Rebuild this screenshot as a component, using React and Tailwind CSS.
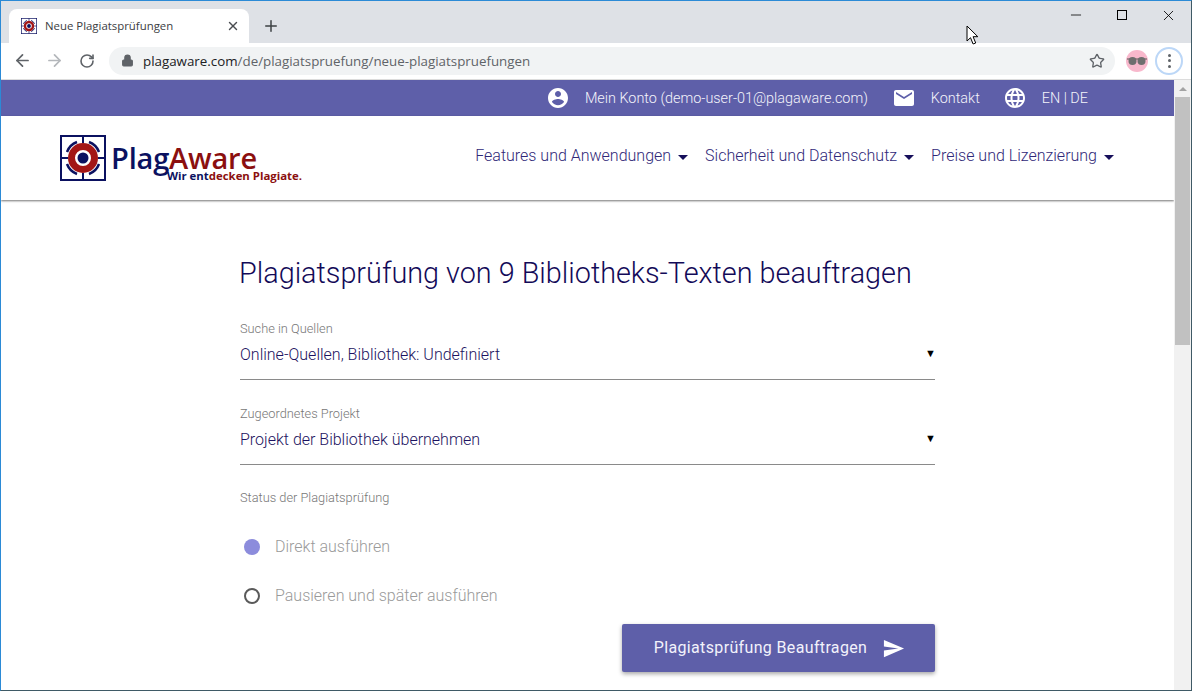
import { Lock, Star, X, Plus, ArrowLeft, ArrowRight, RotateCw, Minus } from 'lucide-react';

function LogoMark({ size = 46 }) {
  return (
    <svg width={size} height={size} viewBox="0 0 46 46">
      <rect x="1" y="1" width="44" height="44" fill="#fff" stroke="#0b1160" strokeWidth="2" />
      <path d="M7 17 A17 17 0 0 1 17 7 M29 7 A17 17 0 0 1 39 17 M39 29 A17 17 0 0 1 29 39 M17 39 A17 17 0 0 1 7 29" fill="none" stroke="#0b1160" strokeWidth="2.5" />
      <path d="M23 1v7M23 38v7M1 23h7M38 23h7" stroke="#0b1160" strokeWidth="2" />
      <circle cx="23" cy="23" r="11.5" fill="none" stroke="#a31616" strokeWidth="7" />
      <circle cx="23" cy="23" r="5.5" fill="#0b1160" />
    </svg>
  );
}

function NavItem({ label }) {
  return (
    <div className="flex items-center gap-[7px]">
      <span>{label}</span>
      <span className="mt-[2px] h-0 w-0 border-x-[5px] border-t-[5px] border-x-transparent border-t-[#160f5a]" />
    </div>
  );
}

function SelectField({ label, value }) {
  return (
    <div className="h-[60px] w-[695px] border-b border-[#8a8a8a]">
      <div className="h-[17px] text-[12.8px] font-light leading-[17px] text-[#777]">{label}</div>
      <div className="mt-[5px] flex h-[25px] items-center justify-between text-[16px] font-light text-[#1c1260]">
        <span>{value}</span>
        <span className="-mr-[1px] text-[11px] text-black">▼</span>
      </div>
    </div>
  );
}

function UserIcon() {
  return (
    <svg width="24" height="24" viewBox="0 0 24 24" fill="#fff">
      <path d="M12 2C6.48 2 2 6.48 2 12s4.48 10 10 10 10-4.48 10-10S17.52 2 12 2zm0 3c1.66 0 3 1.34 3 3s-1.34 3-3 3-3-1.34-3-3 1.34-3 3-3zm0 14.2c-2.5 0-4.71-1.28-6-3.22.03-1.99 4-3.08 6-3.08 1.99 0 5.97 1.09 6 3.08-1.29 1.94-3.5 3.22-6 3.22z" />
    </svg>
  );
}

function MailIcon() {
  return (
    <svg width="24" height="24" viewBox="0 0 24 24" fill="#fff">
      <path d="M20 4H4c-1.1 0-2 .9-2 2v12c0 1.1.9 2 2 2h16c1.100 0 2-.9 2-2V6c0-1.100-.9-2-2-2zm0 4l-8 5-8-5V6l8 5 8-5v2z" />
    </svg>
  );
}

function GlobeIcon() {
  return (
    <svg width="24" height="24" viewBox="0 0 24 24" fill="#fff">
      <path d="M11.99 2C6.47 2 2 6.48 2 12s4.47 10 9.990 10C17.520 22 22 17.520 22 12S17.520 2 11.990 2zm6.930 6h-2.950c-.32-1.250-.78-2.450-1.380-3.560 1.840.63 3.370 1.910 4.330 3.560zM12 4.040c.83 1.200 1.480 2.530 1.910 3.960h-3.820c.43-1.430 1.080-2.760 1.910-3.960zM4.260 14C4.100 13.360 4 12.690 4 12s.1-1.360.26-2h3.380c-.08.66-.14 1.320-.14 2s.06 1.340.14 2H4.260zm.82 2h2.950c.32 1.250.78 2.450 1.380 3.560-1.840-.63-3.370-1.900-4.330-3.560zm2.950-8H5.080c.96-1.660 2.490-2.930 4.330-3.560C8.810 5.550 8.350 6.750 8.030 8zM12 19.960c-.83-1.200-1.480-2.530-1.910-3.960h3.820c-.43 1.430-1.080 2.760-1.910 3.960zM14.340 14H9.660c-.09-.66-.16-1.320-.16-2s.07-1.350.16-2h4.680c.09.65.16 1.320.16 2s-.07 1.340-.16 2zm.25 5.560c.6-1.110 1.060-2.310 1.380-3.560h2.950c-.96 1.650-2.490 2.930-4.330 3.560zM16.360 14c.08-.66.14-1.320.14-2s-.06-1.340-.14-2h3.380c.16.64.26 1.310.26 2s-.1 1.360-.26 2h-3.380z" />
    </svg>
  );
}

export default function App() {
  return (
    <div className="relative flex h-[691px] w-[1192px] flex-col overflow-hidden border border-[#3f5a66] border-l-[#2b8ad6] border-t-[#2b8ad6] bg-white font-['Roboto',sans-serif]">
      {/* Browser tabs */}
      <div className="flex h-[42px] shrink-0 bg-[#dee1e6] font-['Open_Sans',sans-serif]">
        <div className="ml-[8px] mt-[8px] flex h-[34px] w-[240px] items-center rounded-t-[8px] bg-white pl-[12px] pr-[9px] text-[11.4px] text-[#3c4043]">
          <div className="mr-[8px] flex"><LogoMark size={16} /></div>
          <span className="flex-1">Neue Plagiatsprüfungen</span>
          <X size={14} strokeWidth={2.4} className="text-[#4a4d51]" />
        </div>
        <div className="ml-[13px] mt-[8px] flex h-[34px] items-center">
          <Plus size={18} strokeWidth={2} className="text-[#3c4043]" />
        </div>
        <div className="ml-auto flex items-start pt-[6px] text-black">
          <div className="flex w-[46px] justify-center"><Minus size={16} strokeWidth={1.2} /></div>
          <div className="flex w-[46px] justify-center"><span className="mt-[3px] h-[10px] w-[10px] border border-black" /></div>
          <div className="flex w-[46px] justify-center"><X size={17} strokeWidth={1.2} /></div>
        </div>
      </div>

      {/* Browser toolbar */}
      <div className="flex h-[37px] shrink-0 items-center border-b border-[#dcdcdc] bg-white pb-[1px] font-['Open_Sans',sans-serif]">
        <ArrowLeft size={19} strokeWidth={2.2} className="ml-[12px] text-[#5f6368]" />
        <ArrowRight size={19} strokeWidth={2.2} className="ml-[13px] text-[#b4b7bb]" />
        <RotateCw size={16} strokeWidth={2.4} className="ml-[15px] text-[#5f6368]" />
        <div className="ml-[14px] flex h-[28px] w-[1006px] items-center rounded-full bg-[#f1f3f4] pl-[12px] pr-[10px] text-[13.35px]">
          <Lock size={13} fill="#5f6368" strokeWidth={2} className="text-[#5f6368]" />
          <span className="ml-[9px] flex-1 pt-[1px] text-[#202124]">plagaware.com<span className="text-[#5f6368]">/de/plagiatspruefung/neue-plagiatspruefungen</span></span>
          <Star size={16} strokeWidth={2} className="text-[#5f6368]" />
        </div>
        <div className="ml-[11px] flex h-[22px] w-[22px] items-center justify-center rounded-full bg-[#f8b8cc]">
          <svg width="20" height="10" viewBox="0 0 20 10">
            <path d="M0 3h20" stroke="#555" strokeWidth="1" />
            <circle cx="5.500" cy="5" r="4" fill="#6e6e6e" />
            <circle cx="14.500" cy="5" r="4" fill="#6e6e6e" />
          </svg>
        </div>
        <div className="ml-[7px] flex h-[28px] w-[28px] flex-col items-center justify-center gap-[2.500px] rounded-full border-2 border-[#bcd7f7]">
          <span className="h-[3px] w-[3px] rounded-full bg-[#5f6368]" />
          <span className="h-[3px] w-[3px] rounded-full bg-[#5f6368]" />
          <span className="h-[3px] w-[3px] rounded-full bg-[#5f6368]" />
        </div>
      </div>

      <div className="flex min-h-0 flex-1">
        <div className="flex min-w-0 flex-1 flex-col">
          {/* Top bar */}
          <div className="flex h-[36px] shrink-0 items-center justify-end bg-[#5e5fa9] pr-[86px] text-[14.4px] font-light text-[#f4f4fb]">
            <UserIcon />
            <span className="ml-[15px] pt-[1px]">Mein Konto (demo-user-01@plagaware.com)</span>
            <span className="ml-[24px] flex"><MailIcon /></span>
            <span className="ml-[15px] pt-[1px]">Kontakt</span>
            <span className="ml-[23px] flex"><GlobeIcon /></span>
            <span className="ml-[15px] pt-[1px]">EN | DE</span>
          </div>

          {/* Header */}
          <div className="flex h-[84px] shrink-0 items-center justify-between pl-[59px] pr-[60px] shadow-[0_1px_2px_rgba(0,0,0,0.55)]">
            <div className="relative flex h-[46px] items-center">
              <LogoMark />
              <div className="relative ml-[5px] h-[46px] w-[200px]">
                <div className="pt-[11px] font-['Open_Sans',sans-serif] text-[29px] font-semibold leading-[24px] tracking-[-0.2px]">
                  <span className="text-[#0b1160]">Plag</span><span className="text-[#8b0f0f]">Aware</span>
                </div>
                <div className="absolute left-[56px] top-[35px] whitespace-nowrap font-['Open_Sans',sans-serif] text-[11.4px] font-bold leading-[12px]">
                  <span className="text-[#0b1160]">Wir ent</span><span className="text-[#8b0f0f]">decken Plagiate.</span>
                </div>
              </div>
            </div>
            <div className="mb-[4px] flex gap-[17px] text-[16px] font-light text-[#302878]">
              <NavItem label="Features und Anwendungen" />
              <NavItem label="Sicherheit und Datenschutz" />
              <NavItem label="Preise und Lizenzierung" />
            </div>
          </div>

          {/* Form */}
          <div className="flex-1 pl-[239px] pt-[53px]">
            <h1 className="-ml-[1px] text-[28.8px] font-light leading-[40px] text-[#130a58]">Plagiatsprüfung von 9 Bibliotheks-Texten beauftragen</h1>
            <div className="mt-[27px]">
              <SelectField label="Suche in Quellen" value="Online-Quellen, Bibliothek: Undefiniert" />
            </div>
            <div className="mt-[25px]">
              <SelectField label="Zugeordnetes Projekt" value="Projekt der Bibliothek übernehmen" />
            </div>
            <div className="mt-[24px] h-[17px] text-[12.8px] font-light leading-[17px] text-[#777]">Status der Plagiatsprüfung</div>
            <div className="mt-[29px] flex h-[24px] items-center pl-[4px] text-[16px] font-light text-[#9a9a9a]">
              <span className="h-[16px] w-[16px] rounded-full bg-[#8c8cdc]" />
              <span className="ml-[15px]">Direkt ausführen</span>
            </div>
            <div className="mt-[25px] flex h-[24px] items-center pl-[4px] text-[16px] font-light text-[#9a9a9a]">
              <span className="h-[16px] w-[16px] rounded-full border-2 border-[#5a5a5a]" />
              <span className="ml-[15px]">Pausieren und später ausführen</span>
            </div>
            <div className="mt-[16px] flex w-[695px] justify-end">
              <button className="flex h-[48px] w-[313px] items-center justify-center gap-[15px] rounded-[2px] bg-[#5e5fa9] pl-[2px] text-[16px] tracking-[0.35px] text-[#f2f2fb] shadow-[0_2px_4px_rgba(0,0,0,0.35)]">
                <span>Plagiatsprüfung Beauftragen</span>
                <svg width="23" height="23" viewBox="0 0 24 24" fill="#fff"><path d="M2.010 21L23 12 2.010 3 2 10l15 2-15 2z" /></svg>
              </button>
            </div>
          </div>
        </div>

        {/* Scrollbar */}
        <div className="flex w-[17px] shrink-0 flex-col items-center bg-[#f1f1f1]">
          <div className="flex h-[17px] items-center justify-center">
            <span className="h-0 w-0 border-x-[4px] border-b-[4px] border-x-transparent border-b-[#a3a3a3]" />
          </div>
          <div className="h-[248px] w-[15px] bg-[#c1c1c1]" />
        </div>
      </div>

      {/* Mouse pointer */}
      <svg className="absolute left-[965px] top-[24px]" width="14" height="21" viewBox="0 0 14 21">
        <path d="M1 1v15l3.500-3.300 2.600 6.300 2.600-1-2.600-6.300h4.700z" fill="#fff" stroke="#000" strokeWidth="1" />
      </svg>
    </div>
  );
}
